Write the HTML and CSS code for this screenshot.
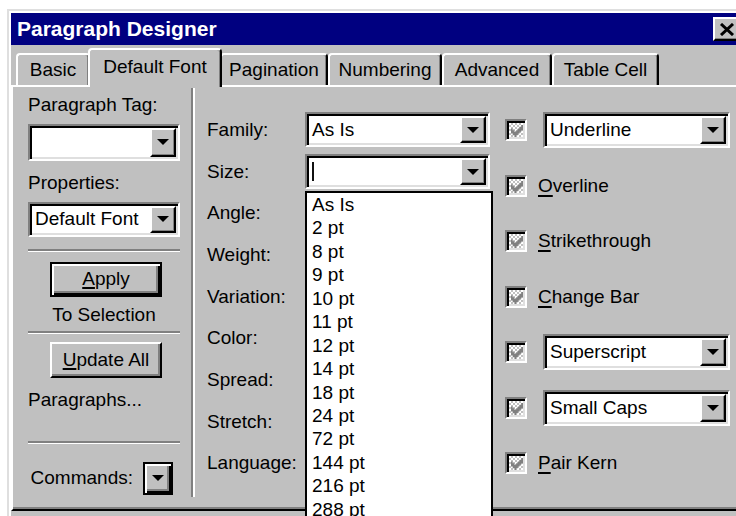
FILE: index.html
```html
<!DOCTYPE html>
<html lang="en">
<head>
<meta charset="utf-8">
<title>Paragraph Designer</title>
<link rel="stylesheet" href="styles.css">
</head>
<body>
<div class="window">
  <div class="titlebar">
    <span class="title">Paragraph Designer</span>
    <button class="close" aria-label="Close">
      <svg width="16" height="13" viewBox="0 0 16 13"><path d="M2 1L14 12M14 1L2 12" stroke="#000" stroke-width="3"/></svg>
    </button>
  </div>

  <div class="tabs">
    <div class="tab tab-basic">Basic</div>
    <div class="tab tab-font active">Default Font</div>
    <div class="tab tab-pagination">Pagination</div>
    <div class="tab tab-numbering">Numbering</div>
    <div class="tab tab-advanced">Advanced</div>
    <div class="tab tab-cell">Table Cell</div>
  </div>

  <div class="panel">
    <aside class="side">
      <div class="label">Paragraph Tag:</div>
      <div class="combo side-combo tag-combo"><span class="value"></span><span class="drop"><i class="arrow"></i></span></div>
      <div class="label properties">Properties:</div>
      <div class="combo side-combo props-combo"><span class="value">Default Font</span><span class="drop"><i class="arrow"></i></span></div>
      <hr class="etch first-etch">
      <button class="btn default apply"><u>A</u>pply</button>
      <div class="caption">To Selection</div>
      <hr class="etch mid-etch">
      <button class="btn update"><u>U</u>pdate All</button>
      <div class="label paragraphs">Paragraphs...</div>
      <hr class="etch last-etch">
      <div class="commands">
        <span>Commands:</span>
        <button class="btn default mini" aria-label="Commands"><i class="arrow"></i></button>
      </div>
    </aside>

    <div class="vsep"></div>

    <section class="fields">
      <div class="field-label">Family:</div>
      <div class="combo"><span class="value">As Is</span><span class="drop"><i class="arrow"></i></span></div>

      <div class="field-label">Size:</div>
      <div class="size-cell">
        <div class="combo"><span class="value"><span class="caret"></span></span><span class="drop"><i class="arrow"></i></span></div>
        <ul class="size-list">
          <li>As Is</li>
          <li>2 pt</li>
          <li>8 pt</li>
          <li>9 pt</li>
          <li>10 pt</li>
          <li>11 pt</li>
          <li>12 pt</li>
          <li>14 pt</li>
          <li>18 pt</li>
          <li>24 pt</li>
          <li>72 pt</li>
          <li>144 pt</li>
          <li>216 pt</li>
          <li>288 pt</li>
        </ul>
      </div>

      <div class="field-label">Angle:</div><div></div>
      <div class="field-label">Weight:</div><div></div>
      <div class="field-label">Variation:</div><div></div>
      <div class="field-label">Color:</div><div></div>
      <div class="field-label">Spread:</div><div></div>
      <div class="field-label">Stretch:</div><div></div>
      <div class="field-label">Language:</div><div></div>
    </section>

    <section class="effects">
      <div class="row">
        <span class="check"><svg width="12" height="12" viewBox="0 0 7 7"><path d="M6 0h1v1H6zM5 1h2v1H5zM0 2h1v1H0zM4 2h3v1H4zM0 3h2v1H0zM3 3h3v1H3zM0 4h5v1H0zM1 5h3v1H1zM2 6h1v1H2z"/></svg></span>
        <div class="combo wide"><span class="value">Underline</span><span class="drop"><i class="arrow"></i></span></div>
      </div>
      <div class="row">
        <span class="check"><svg width="12" height="12" viewBox="0 0 7 7"><path d="M6 0h1v1H6zM5 1h2v1H5zM0 2h1v1H0zM4 2h3v1H4zM0 3h2v1H0zM3 3h3v1H3zM0 4h5v1H0zM1 5h3v1H1zM2 6h1v1H2z"/></svg></span>
        <span class="opt"><u>O</u>verline</span>
      </div>
      <div class="row">
        <span class="check"><svg width="12" height="12" viewBox="0 0 7 7"><path d="M6 0h1v1H6zM5 1h2v1H5zM0 2h1v1H0zM4 2h3v1H4zM0 3h2v1H0zM3 3h3v1H3zM0 4h5v1H0zM1 5h3v1H1zM2 6h1v1H2z"/></svg></span>
        <span class="opt"><u>S</u>trikethrough</span>
      </div>
      <div class="row">
        <span class="check"><svg width="12" height="12" viewBox="0 0 7 7"><path d="M6 0h1v1H6zM5 1h2v1H5zM0 2h1v1H0zM4 2h3v1H4zM0 3h2v1H0zM3 3h3v1H3zM0 4h5v1H0zM1 5h3v1H1zM2 6h1v1H2z"/></svg></span>
        <span class="opt"><u>C</u>hange Bar</span>
      </div>
      <div class="row">
        <span class="check"><svg width="12" height="12" viewBox="0 0 7 7"><path d="M6 0h1v1H6zM5 1h2v1H5zM0 2h1v1H0zM4 2h3v1H4zM0 3h2v1H0zM3 3h3v1H3zM0 4h5v1H0zM1 5h3v1H1zM2 6h1v1H2z"/></svg></span>
        <div class="combo wide"><span class="value">Superscript</span><span class="drop"><i class="arrow"></i></span></div>
      </div>
      <div class="row">
        <span class="check"><svg width="12" height="12" viewBox="0 0 7 7"><path d="M6 0h1v1H6zM5 1h2v1H5zM0 2h1v1H0zM4 2h3v1H4zM0 3h2v1H0zM3 3h3v1H3zM0 4h5v1H0zM1 5h3v1H1zM2 6h1v1H2z"/></svg></span>
        <div class="combo wide"><span class="value">Small Caps</span><span class="drop"><i class="arrow"></i></span></div>
      </div>
      <div class="row">
        <span class="check"><svg width="12" height="12" viewBox="0 0 7 7"><path d="M6 0h1v1H6zM5 1h2v1H5zM0 2h1v1H0zM4 2h3v1H4zM0 3h2v1H0zM3 3h3v1H3zM0 4h5v1H0zM1 5h3v1H1zM2 6h1v1H2z"/></svg></span>
        <span class="opt"><u>P</u>air Kern</span>
      </div>
    </section>
  </div>
</div>
</body>
</html>
```

FILE: styles.css
```css
html, body {
  margin: 0;
  height: 100%;
  overflow: hidden;
  background: #fff;
}

body {
  font-family: "Liberation Sans", Arial, sans-serif;
  font-size: 19px;
  line-height: 22px;
  color: #000;
}

u {
  text-decoration-thickness: 2px;
  text-underline-offset: 3px;
}

/* ---------- window frame ---------- */
.window {
  box-sizing: border-box;
  width: 742px;
  margin: 9px 0 0 7px;
  padding: 2px 2px 20px;
  background: #c0c0c0;
  border: 2px solid;
  border-color: #dfdfdf #000 #000 #dfdfdf;
  box-shadow: inset 2px 2px #fff, inset -2px -2px #808080;
}

.titlebar {
  height: 32px;
  display: flex;
  align-items: center;
  justify-content: space-between;
  padding: 0 4px 0 6px;
  background: #000080;
}

.title {
  color: #fff;
  font-weight: bold;
  font-size: 21px;
  line-height: 24px;
}

.close {
  box-sizing: border-box;
  width: 28px;
  height: 24px;
  padding: 0;
  display: flex;
  align-items: center;
  justify-content: center;
  background: #c0c0c0;
  border: 2px solid;
  border-color: #fff #000 #000 #fff;
  box-shadow: inset -1px -1px #808080;
}

/* ---------- tab strip ---------- */
.tabs {
  position: relative;
  z-index: 1;
  display: flex;
  align-items: flex-end;
  height: 42px;
  margin-bottom: -2px;
  padding-left: 5px;
}

.tab {
  box-sizing: border-box;
  flex: none;
  height: 32px;
  margin-bottom: 2px;
  padding-top: 4px;
  text-align: center;
  white-space: nowrap;
  background: #c0c0c0;
  border: 2px solid #fff;
  border-bottom: 0;
  border-right-color: #000;
  border-radius: 4px 4px 0 0;
  box-shadow: inset -1px 0 #808080;
}

.tab.active {
  position: relative;
  z-index: 2;
  height: 39px;
  margin: 0 -2px;
  padding-top: 6px;
}

.tab-basic { width: 74px; }
.tab-font { width: 134px; }
.tab-pagination { width: 108px; }
.tab-numbering { width: 114px; }
.tab-advanced { width: 110px; }
.tab-cell { width: 107px; }

/* ---------- tab page ---------- */
.panel {
  box-sizing: border-box;
  display: flex;
  height: 426px;
  border: 2px solid;
  border-color: #fff #000 #000 #fff;
  box-shadow: inset -2px -2px #808080;
}

/* left command column */
.side {
  flex: none;
  width: 152px;
  padding: 7.4px 11px 0 15px;
}

.vsep {
  flex: none;
  width: 4px;
  margin: 1px 0 12px;
  background: linear-gradient(to right, #808080 50%, #fff 50%);
}

.label { white-space: nowrap; }
.side .properties { margin-top: 11.4px; }
.side .paragraphs { margin-top: 11.4px; }

.side-combo { width: 152px; }
.side .tag-combo { height: 37px; margin-top: 7.6px; }
.side .props-combo { height: 35px; margin-top: 7.3px; }

.etch {
  height: 0;
  margin: 0;
  border: 0;
  border-top: 2px solid #808080;
  border-bottom: 1px solid #fff;
}
.side .first-etch { margin-top: 12.3px; }
.side .mid-etch { margin-top: 5px; }
.side .last-etch { margin-top: 29.6px; }

.btn {
  display: block;
  box-sizing: border-box;
  width: 112px;
  height: 36px;
  margin-left: 22px;
  padding: 0;
  font: inherit;
  color: #000;
  background: #c0c0c0;
  border: 2px solid;
  border-color: #fff #000 #000 #fff;
  box-shadow: inset -2px -2px #808080;
}

.btn u { text-underline-offset: 2px; }

.btn.default {
  border-color: #000;
  box-shadow: inset 2px 2px #fff, inset -2px -2px #000, inset -4px -4px #808080;
}

.side .apply { height: 35px; margin-top: 10px; }
.side .update { margin-top: 8px; }

.caption {
  margin-top: 7px;
  text-align: center;
}

.commands {
  display: flex;
  align-items: center;
  justify-content: flex-end;
  gap: 10px;
  margin-top: 18px;
  padding-right: 7px;
}

.btn.mini {
  display: flex;
  align-items: center;
  justify-content: center;
  width: 30px;
  height: 33px;
  margin: 0;
}

/* ---------- combo boxes ---------- */
.combo {
  box-sizing: border-box;
  display: flex;
  height: 35px;
  padding: 2px;
  background: #fff;
  border: 2px solid;
  border-color: #808080 #fff #fff #808080;
  box-shadow: inset 2px 2px #000, inset -2px -2px #dfdfdf;
}

.combo .value {
  flex: 1;
  display: flex;
  align-items: center;
  min-width: 0;
  padding-left: 3px;
  white-space: nowrap;
  overflow: hidden;
}

.drop {
  flex: none;
  box-sizing: border-box;
  width: 26px;
  display: flex;
  align-items: center;
  justify-content: center;
  background: #c0c0c0;
  border: 2px solid;
  border-color: #fff #000 #000 #fff;
  box-shadow: inset -1px -1px #808080;
}

.arrow {
  display: block;
  width: 0;
  height: 0;
  border-left: 6px solid transparent;
  border-right: 6px solid transparent;
  border-top: 6px solid #000;
}

.caret {
  display: block;
  width: 2px;
  height: 19px;
  background: #111;
}

/* ---------- font fields ---------- */
.fields {
  flex: none;
  display: grid;
  grid-template-columns: 98px 185px;
  grid-auto-rows: 41.7px;
  align-items: center;
  align-content: start;
  padding: 22px 0 0 12px;
}

.field-label { white-space: nowrap; }

.size-cell { position: relative; }

.size-list {
  position: absolute;
  top: calc(100% + 2px);
  left: 0;
  z-index: 5;
  box-sizing: border-box;
  width: 188px;
  margin: 0;
  padding: 0;
  list-style: none;
  background: #fff;
  border: 2px solid #000;
}

.size-list li {
  height: 23.45px;
  line-height: 23.45px;
  padding-left: 5px;
}

/* ---------- effect checkboxes ---------- */
.effects {
  flex: none;
  padding: 15.25px 0 0 15px;
}

.effects .row {
  display: flex;
  align-items: center;
  height: 55.5px;
}

.check {
  flex: none;
  box-sizing: border-box;
  width: 22px;
  height: 22px;
  display: flex;
  align-items: center;
  justify-content: center;
  padding: 2px 0 0 2px;
  border: 2px solid;
  border-color: #808080 #fff #fff #808080;
  background: repeating-conic-gradient(#c0c0c0 0 25%, #fff 0 50%) 0 0 / 4px 4px;
  box-shadow: inset 2px 2px #000, inset -2px -2px #dfdfdf;
}

.check svg { fill: #808080; }

.opt {
  margin-left: 11px;
  white-space: nowrap;
}

.combo.wide {
  width: 187px;
  height: 36px;
  margin-left: 16px;
}
```
